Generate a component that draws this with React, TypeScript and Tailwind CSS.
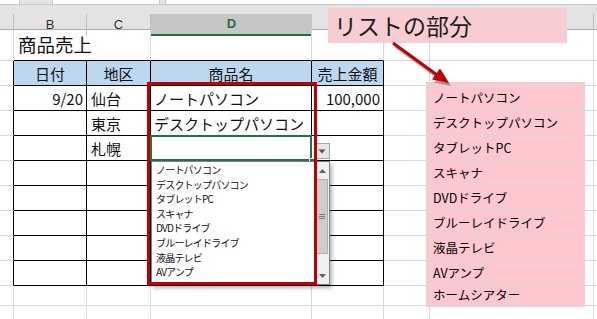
import React from 'react';

const cols = 'grid grid-cols-[14px_73px_64px_161px_72px_46px_164px_1fr]';
const jp = "font-['Noto_Sans_CJK_JP',sans-serif]";
const grid = 'border-r border-b border-[#d9d9d9]';
const tbl = 'border-r border-b border-black flex items-center text-[15px] leading-none text-[#111]';

const listItems = [
  'ノートパソコン',
  'デスクトップパソコン',
  'タブレットPC',
  'スキャナ',
  'DVDドライブ',
  'ブルーレイドライブ',
  '液晶テレビ',
  'AVアンプ',
  'ホームシアター',
];

const bodyRows = [
  { date: '9/20', area: '仙台', item: 'ノートパソコン', amount: '100,000' },
  { date: '', area: '東京', item: 'デスクトップパソコン', amount: '' },
  { date: '', area: '札幌', item: '', amount: '', active: true },
  { date: '', area: '', item: '', amount: '' },
  { date: '', area: '', item: '', amount: '' },
  { date: '', area: '', item: '', amount: '' },
  { date: '', area: '', item: '', amount: '' },
  { date: '', area: '', item: '', amount: '' },
];

const ListCell: React.FC<{ text?: string }> = ({ text }) => (
  <div className={`${grid} flex items-center pl-[3px] text-[12.5px] text-black`}>{text}</div>
);

export default function App() {
  return (
    <div className={`relative w-[597px] h-[319px] overflow-hidden bg-white ${jp}`}>
      {/* pink list shape (behind gridlines) */}
      <div className="absolute left-[426px] top-[82px] w-[159px] h-[225px] bg-[#ffc7ce]" />

      <div className="relative">
        {/* formula bar remains */}
        <div className="flex h-[5px] bg-[#e3e3e3] border-b border-[#c8c8c8]">
          <div className="w-[20px] bg-white border-r border-[#c8c8c8]" />
          <div className="w-[32px]" />
          <div className="w-[108px] bg-white border-x border-[#c8c8c8]" />
          <div className="w-[5px]" />
          <div className="flex-1 bg-white border-l border-[#c8c8c8]" />
        </div>
        <div className="h-[9px] bg-[#e3e3e3]" />

        {/* column headers */}
        <div className={`${cols} h-[16px] bg-[#e3e3e3] text-[13px] text-[#333] font-['Liberation_Sans',sans-serif] border-b border-[#ababab]`}>
          <div className="border-r border-[#bdbdbd]" />
          <div className="border-r border-[#bdbdbd] flex items-center justify-center">B</div>
          <div className="border-r border-[#bdbdbd] flex items-center justify-center">C</div>
          <div className="bg-[#c6c6c6] border-b-2 border-[#217346] flex items-center justify-center text-[#217346] font-bold">D</div>
          <div className="border-r border-[#bdbdbd]" />
          <div className="border-r border-[#bdbdbd]" />
          <div className="border-r border-[#bdbdbd]" />
          <div />
        </div>

        {/* title row */}
        <div className={`${cols} h-[31px]`}>
          <div className={grid} />
          <div className="col-span-2 border-r border-[#d9d9d9] border-b border-b-black flex items-center pl-[4px] text-[18.5px] text-[#111]">商品売上</div>
          <div className="border-r border-[#d9d9d9] border-b border-b-black" />
          <div className="border-r border-[#d9d9d9] border-b border-b-black" />
          <div className={grid} />
          <div className={grid} />
          <div className="border-b border-[#d9d9d9]" />
        </div>

        {/* table header */}
        <div className={`${cols} h-[25px]`}>
          <div className="border-r border-r-black border-b border-[#d9d9d9]" />
          <div className={`${tbl} bg-[#bdd7ee] justify-center`}>日付</div>
          <div className={`${tbl} bg-[#bdd7ee] justify-center`}>地区</div>
          <div className={`${tbl} bg-[#bdd7ee] justify-center`}>商品名</div>
          <div className={`${tbl} bg-[#bdd7ee] justify-center`}>売上金額</div>
          <div className={grid} />
          <div className={grid} />
          <div className="border-b border-[#d9d9d9]" />
        </div>

        {/* table body */}
        {bodyRows.map((r, i) => (
          <div key={i} className={`${cols} h-[25px]`}>
            <div className="border-r border-r-black border-b border-[#d9d9d9]" />
            <div className={`${tbl} justify-end pr-[3px]`}>{r.date}</div>
            <div className={`${tbl} pl-[4px]`}>{r.area}</div>
            <div className={`${tbl} pl-[3px] relative`}>
              {r.item}
              {r.active && (
                <>
                  <div className="absolute -left-px -top-px -right-px -bottom-px border-2 border-[#217346]" />
                  <div className="absolute right-[-4px] bottom-[-4px] w-[6px] h-[6px] bg-[#217346] border border-white" />
                </>
              )}
            </div>
            <div className={`${tbl} justify-end pr-[3px]`}>{r.amount}</div>
            <div className={grid} />
            <ListCell text={listItems[i]} />
            <div className="border-b border-[#d9d9d9]" />
          </div>
        ))}

        {/* after table */}
        <div className={`${cols} h-[19px]`}>
          <div className={grid} />
          <div className={grid} />
          <div className={grid} />
          <div className={grid} />
          <div className={grid} />
          <div className={grid} />
          <ListCell text={listItems[8]} />
          <div className="border-b border-[#d9d9d9]" />
        </div>
        <div className={`${cols} h-[20px]`}>
          <div className="border-r border-[#d9d9d9]" />
          <div className="border-r border-[#d9d9d9]" />
          <div className="border-r border-[#d9d9d9]" />
          <div className="border-r border-[#d9d9d9]" />
          <div className="border-r border-[#d9d9d9]" />
          <div className="border-r border-[#d9d9d9]" />
          <div className="border-r border-[#d9d9d9]" />
          <div />
        </div>
      </div>

      {/* dropdown button */}
      <div className="absolute left-[314px] top-[143px] w-[16px] h-[16px] bg-[#e6e6e6] border border-[#a6a6a6] flex items-center justify-center">
        <svg width="8" height="5" viewBox="0 0 8 5"><path d="M0.5 0.5h7L4 4.5z" fill="#555" /></svg>
      </div>

      {/* dropdown list */}
      <div className="absolute left-[151px] top-[161px] w-[179px] h-[124px] bg-white border border-[#828282] shadow-[2px_3px_4px_rgba(0,0,0,0.3)] flex">
        <div className="flex-1 pl-[4px] pt-px text-[10px] leading-[14.6px] tracking-[-0.8px] text-[#111122]">
          {listItems.slice(0, 8).map((t) => (
            <div key={t}>{t}</div>
          ))}
        </div>
        <div className="w-[15px] bg-[#f0f0f0] border-l border-[#e3e3e3] flex flex-col items-center">
          <div className="h-[17px] flex items-center justify-center">
            <svg width="7" height="4" viewBox="0 0 7 4"><path d="M0 4h7L3.5 0z" fill="#606060" /></svg>
          </div>
          <div className="w-[12px] h-[75px] bg-[#cdcdcd] border border-[#b0b0b0] flex flex-col items-center justify-center gap-[1px]">
            <div className="w-[6px] h-px bg-[#7a7a7a]" />
            <div className="w-[6px] h-px bg-[#7a7a7a]" />
            <div className="w-[6px] h-px bg-[#7a7a7a]" />
          </div>
          <div className="flex-1" />
          <div className="h-[17px] flex items-center justify-center">
            <svg width="7" height="4" viewBox="0 0 7 4"><path d="M0 0h7L3.5 4z" fill="#606060" /></svg>
          </div>
        </div>
      </div>

      {/* red outline */}
      <div className="absolute left-[147px] top-[82px] w-[170px] h-[203px] border-[3px] border-[#c00000]" />

      {/* callout */}
      <div className="absolute left-[328px] top-[8px] w-[239px] h-[35px] bg-[#f8cdd1] flex items-center pl-[6px] text-[23px] leading-none text-[#1c1c1c]">
        リストの部分
      </div>

      {/* arrow */}
      <svg className="absolute left-[380px] top-[36px]" width="84" height="58" viewBox="0 0 84 58">
        <g transform="translate(2 3)" opacity="0.3">
          <line x1="13" y1="7" x2="57" y2="39" stroke="#000" strokeWidth="3" />
          <path d="M69 47 L52 43.5 L60 32.5 Z" fill="#000" />
        </g>
        <line x1="13" y1="7" x2="57" y2="39" stroke="#c00000" strokeWidth="3" />
        <path d="M69 47 L52 43.5 L60 32.5 Z" fill="#c00000" />
      </svg>
    </div>
  );
}
